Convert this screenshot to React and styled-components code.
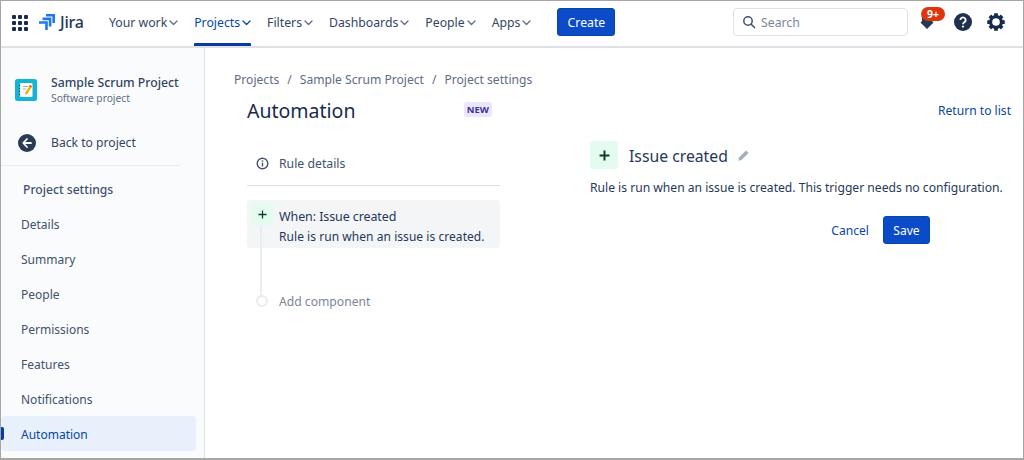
import React from "react";
import styled, { createGlobalStyle } from "styled-components";

const Global = createGlobalStyle`
  html, body { margin: 0; padding: 0; background: #fff; }
  body { font-family: "Noto Sans", "Open Sans", sans-serif; font-size: 12.25px; color: #172b4d; }
  * { box-sizing: border-box; }
`;

const Frame = styled.div`
  width: 1024px; height: 460px; border: 1px solid #a6a6a6; border-bottom-width: 2px;
  display: flex; flex-direction: column; overflow: hidden; background: #fff;
`;
const TopBar = styled.header`
  height: 47px; flex: none; display: flex; align-items: stretch; padding-left: 11px;
  border-bottom: 2px solid #dfe1e6;
`;
const GridBtn = styled.div`
  width: 16px; margin-right: 11px; padding-bottom: 2px; display: flex; align-items: center;
`;
const Logo = styled.div`
  display: flex; align-items: center; gap: 5px; width: 61px; margin-right: 9px; padding-bottom: 3px;
  font-size: 16px; font-weight: 500; color: #253858; letter-spacing: -0.2px;
`;
const NavItem = styled.div`
  position: relative; display: flex; align-items: center; gap: 2px; margin-right: 16px; height: 45px; padding-bottom: 2px;
  font-size: 12.25px; color: ${p => (p.$active ? "#0747a6" : "#344563")};
  &::after {
    content: ""; display: ${p => (p.$active ? "block" : "none")}; position: absolute;
    left: 0; right: 0; bottom: 0; height: 3px; background: #0a3aa5; border-radius: 1px 1px 0 0;
  }
`;
const CreateBtn = styled.button`
  width: 58px; height: 28px; margin: 7px 0 0 10px; border: 1px solid #0747a6; border-radius: 3px;
  background: #0b4bc8; color: #fff; font: 12.25px "Noto Sans", sans-serif; padding: 0;
`;
const Spacer = styled.div`flex: 1;`;
const Search = styled.div`
  width: 175px; height: 28px; margin: 7px 7px 0 0; border: 1px solid #dfe1e6; border-radius: 4px;
  display: flex; align-items: center; gap: 5px; padding-left: 8px; color: #7a869a; font-size: 12.25px;
`;
const IconSlot = styled.div`
  position: relative; width: 24px; height: 24px; margin-top: 9px;
  margin-right: ${p => p.$mr || 0}px; display: flex; align-items: center; justify-content: center;
`;
const Badge = styled.span`
  position: absolute; top: -3px; left: 6px; height: 14px; width: 24px; border-radius: 8px;
  background: #de350b; color: #fff; font-size: 10.5px; font-weight: 700; line-height: 14px; text-align: center;
`;
const Body = styled.div`flex: 1; display: flex; min-height: 0;`;
const Sidebar = styled.aside`
  width: 204px; flex: none; background: #fafbfc; border-right: 1px solid #dfe1e6; padding-top: 25px;
  display: flex; flex-direction: column;
`;
const ProjectHead = styled.div`
  display: flex; align-items: center; gap: 14px; padding-left: 14px; height: 34px;
`;
const ProjectName = styled.div`font-size: 12.25px; font-weight: 500; color: #344563; line-height: 16px; white-space: nowrap;`;
const ProjectType = styled.div`font-size: 10.25px; color: #5e6c84; line-height: 14px;`;
const BackRow = styled.div`
  display: flex; align-items: center; gap: 15px; padding-left: 17px; height: 33px; margin-top: 19px;
  font-size: 12.15px; color: #344563;
`;
const SideRule = styled.div`height: 1px; background: #ebecf0; width: 179px; margin-top: 6px;`;
const SideTitle = styled.div`
  font-size: 12.15px; font-weight: 500; color: #42526e; padding-left: 22px; height: 24px; line-height: 24px; margin-top: 12px; margin-bottom: 4px;
`;
const SideItem = styled.div`
  position: relative; height: 35px; line-height: 37px; padding-left: 20px; width: 195px; font-size: 12px; border-radius: 4px;
  color: ${p => (p.$active ? "#0747a6" : "#42526e")};
  background: ${p => (p.$active ? "#e8f0fb" : "transparent")};
  &::before {
    content: ""; display: ${p => (p.$active ? "block" : "none")}; position: absolute;
    left: 0; top: 11px; width: 3px; height: 13px; background: #0a3aa5; border-radius: 0 2px 2px 0;
  }
`;
const Main = styled.main`flex: 1; padding: 23px 12px 0 29px; min-width: 0;`;
const Crumbs = styled.div`
  display: flex; gap: 8px; font-size: 12.1px; color: #5e6c84; line-height: 18px; height: 18px;
`;
const Columns = styled.div`display: flex; padding-left: 13px;`;
const LeftCol = styled.section`width: 253px; flex: none; margin-right: 90px;`;
const TitleRow = styled.div`display: flex; align-items: center; justify-content: space-between; height: 30px; margin-top: 8px;`;
const H1 = styled.h1`margin: 0 0 2px; font-size: 19.5px; font-weight: 400; color: #172b4d; line-height: 28px;`;
const Lozenge = styled.span`
  background: #eae6ff; color: #403294; font-size: 9.5px; font-weight: 700; padding: 0 3px; margin: 0 8px 5px 0; border-radius: 3px; line-height: 15px;
`;
const DetailsRow = styled.div`
  display: flex; align-items: center; gap: 10px; padding: 2px 0 0 9px; height: 46px; margin-top: 13px;
  font-size: 12.25px; color: #42526e; border-bottom: 1px solid #dfe1e6; margin-bottom: 14px;
`;
const Flow = styled.div`position: relative; height: 120px;`;
const TriggerCard = styled.div`
  display: flex; height: 48px; width: 253px; background: #f4f5f7; border-radius: 4px;
`;
const TriggerIcon = styled.div`
  width: 22px; height: 23px; margin: 3px 6px 0 4px; background: #e3fcef; border-radius: 3px; display: flex; align-items: center; justify-content: center;
`;
const TriggerText = styled.div`padding-top: 7px;`;
const TriggerTitle = styled.div`font-size: 12.5px; color: #253858; line-height: 20px; letter-spacing: -0.1px;`;
const TriggerDesc = styled.div`font-size: 12px; color: #253858; line-height: 20px; white-space: nowrap; letter-spacing: 0.05px;`;
const Connector = styled.div`position: absolute; left: 13px; top: 26px; width: 2px; height: 69px; background: #ebecf0;`;
const AddRow = styled.div`
  display: flex; align-items: center; gap: 11px; padding-left: 9px; height: 20px; margin-top: 43px; color: #7a869a; font-size: 12.15px;
`;
const Dot = styled.span`width: 12px; height: 12px; flex: none; border-radius: 50%; border: 2px solid #ebecf0; background: #fff; position: relative; z-index: 1;`;
const RightCol = styled.section`flex: 1; min-width: 0; display: flex; flex-direction: column;`;
const ReturnLink = styled.div`
  align-self: flex-end; font-size: 12.1px; color: #0747a6; line-height: 18px; margin-top: 13px; white-space: nowrap;
`;
const PanelHead = styled.div`display: flex; align-items: center; margin-top: 21px; height: 28px;`;
const PanelIcon = styled.div`
  width: 28px; height: 28px; background: #e3fcef; border-radius: 3px; display: flex; align-items: center; justify-content: center; margin-right: 11px;
`;
const H2 = styled.h2`margin: 2px 9px 0 0; font-size: 15.75px; font-weight: 400; color: #253858;`;
const PanelDesc = styled.p`margin: 9px 0 0; font-size: 12.12px; line-height: 20px; color: #253858; white-space: nowrap;`;
const Actions = styled.div`display: flex; justify-content: flex-end; align-items: center; gap: 14px; margin: 18px 6px 0 0; width: 340px;`;
const Cancel = styled.span`color: #0747a6; font-size: 12.1px;`;
const SaveBtn = styled.button`
  width: 47px; height: 28px; border: 1px solid #0747a6; border-radius: 3px; background: #0b4bc8; color: #fff; font: 12.1px "Noto Sans", sans-serif; padding: 0;
`;

const Chevron = ({ color = "#5e6c84" }) => (
  <svg width="9" height="9" viewBox="0 0 9 9"><path d="M1 3 4.500 6.500 8 3" fill="none" stroke={color} strokeWidth="1.3" strokeLinecap="round" strokeLinejoin="round" /></svg>
);
const Plus = ({ s = 10, w = 1.6 }) => (
  <svg width={s} height={s} viewBox="0 0 10 10"><path d="M5 .5v9M.5 5h9" stroke="#0b3d2a" strokeWidth={w} fill="none" /></svg>
);
const Dots = () => (
  <svg width="16" height="16" viewBox="0 0 16 16" fill="#172b4d">
    {[0, 6, 12].flatMap(y => [0, 6, 12].map(x => <rect key={`${x}-${y}`} x={x} y={y} width="4" height="4" rx="1" />))}
  </svg>
);
const JiraMark = () => (
  <svg width="16" height="16" viewBox="0 0 16 16" fill="#1f78f0">
    <path d="M7 0h9v9h-2.600V2.600H7z" />
    <path d="M3.600 3.600h8.800v8.800H9.800V6.200H3.600z" />
    <path d="M0 7.200h8.800V16H6.200V9.800H0z" />
  </svg>
);
const ProjectLogo = () => (
  <svg width="22" height="22" viewBox="0 0 22 22" style={{ marginTop: -1 }}>
    <rect width="22" height="22" rx="2.500" fill="#13b5d6" />
    <rect x="5" y="4" width="12.500" height="14" rx="1" fill="#fff" />
    <path d="M5 6.500h-1M5 9.500h-1M5 12.500h-1M5 15.500h-1" stroke="#253858" strokeWidth="1" />
    <path d="M8 7.500h5M8 10h3" stroke="#a5adba" strokeWidth="1" />
    <path d="M15 6l2 1.300-4.500 7.500-2.300 1.200.2-2.500z" fill="#ffab00" />
    <path d="M15 6l2 1.300-.8 1.300-2-1.300z" fill="#e5493a" />
  </svg>
);
const BackIcon = () => (
  <svg width="18" height="18" viewBox="0 0 18 18">
    <circle cx="9" cy="9" r="9" fill="#2b3a55" />
    <path d="M9 5 5.200 9 9 13M5.500 9h7.500" fill="none" stroke="#fff" strokeWidth="1.800" strokeLinecap="round" strokeLinejoin="round" />
  </svg>
);
const InfoIcon = () => (
  <svg width="13" height="13" viewBox="0 0 13 13">
    <circle cx="6.500" cy="6.500" r="5.300" fill="none" stroke="#42526e" strokeWidth="1.400" />
    <rect x="5.800" y="5.700" width="1.400" height="3.800" fill="#42526e" />
    <rect x="5.800" y="3.400" width="1.400" height="1.400" fill="#42526e" />
  </svg>
);
const SearchIcon = () => (
  <svg width="14" height="14" viewBox="0 0 14 14"><circle cx="6" cy="6" r="4.200" fill="none" stroke="#42526e" strokeWidth="1.500" /><path d="m9.200 9.200 3.300 3.300" stroke="#42526e" strokeWidth="1.500" strokeLinecap="round" /></svg>
);
const Bell = () => (
  <svg width="18" height="18" viewBox="0 0 18 18" fill="#253858"><path d="M9 1a5 5 0 0 0-5 5v2L2.500 9.500 9 16l6.500-6.500L14 8V6a5 5 0 0 0-5-5z" /></svg>
);
const Help = () => (
  <svg width="18" height="18" viewBox="0 0 19 19">
    <circle cx="9.500" cy="9.500" r="9.500" fill="#1f2f4d" />
    <path d="M6.700 7.400a2.800 2.800 0 1 1 4.300 2.400c-1 .6-1.500 1-1.500 2" fill="none" stroke="#fff" strokeWidth="2" />
    <circle cx="9.500" cy="14.300" r="1.200" fill="#fff" />
  </svg>
);
const Gear = () => (
  <svg width="20" height="20" viewBox="0 0 24 24" fill="none"><path d="M12 1.500v5M12 17.500v5M1.500 12h5M17.500 12h5M4.600 4.600l3.500 3.500M15.900 15.900l3.500 3.500M19.400 4.600l-3.500 3.500M8.100 15.900l-3.500 3.500" stroke="#172b4d" strokeWidth="4.500" /><circle cx="12" cy="12" r="6.500" stroke="#172b4d" strokeWidth="3.800" fill="#fff" /></svg>
);
const Pencil = () => (
  <svg width="13" height="13" viewBox="0 0 13 13" fill="#a5adba"><path d="M9 1.500 11.500 4 4.500 11 1.500 11.700 2 8.500z" /></svg>
);

const nav = [["Your work"], ["Projects", true], ["Filters"], ["Dashboards"], ["People"], ["Apps"]];
const side = ["Details", "Summary", "People", "Permissions", "Features", "Notifications"];

export default function App() {
  return (
    <Frame>
      <Global />
      <TopBar>
        <GridBtn><Dots /></GridBtn>
        <Logo><JiraMark />Jira</Logo>
        {nav.map(([label, active]) => (
          <NavItem key={label} $active={active}>{label}<Chevron color={active ? "#0747a6" : "#5e6c84"} /></NavItem>
        ))}
        <CreateBtn>Create</CreateBtn>
        <Spacer />
        <Search><SearchIcon />Search</Search>
        <IconSlot $mr={12}><Bell /><Badge>9+</Badge></IconSlot>
        <IconSlot $mr={9}><Help /></IconSlot>
        <IconSlot $mr={15}><Gear /></IconSlot>
      </TopBar>
      <Body>
        <Sidebar>
          <ProjectHead>
            <ProjectLogo />
            <div>
              <ProjectName>Sample Scrum Project</ProjectName>
              <ProjectType>Software project</ProjectType>
            </div>
          </ProjectHead>
          <BackRow><BackIcon />Back to project</BackRow>
          <SideRule />
          <SideTitle>Project settings</SideTitle>
          {side.map(s => <SideItem key={s}>{s}</SideItem>)}
          <SideItem $active>Automation</SideItem>
        </Sidebar>
        <Main>
          <Crumbs>
            <span>Projects</span><span>/</span><span>Sample Scrum Project</span><span>/</span><span>Project settings</span>
          </Crumbs>
          <Columns>
            <LeftCol>
              <TitleRow><H1>Automation</H1><Lozenge>NEW</Lozenge></TitleRow>
              <DetailsRow><InfoIcon />Rule details</DetailsRow>
              <Flow>
                <TriggerCard>
                  <TriggerIcon><Plus s={9} w={1.4} /></TriggerIcon>
                  <TriggerText>
                    <TriggerTitle>When: Issue created</TriggerTitle>
                    <TriggerDesc>Rule is run when an issue is created.</TriggerDesc>
                  </TriggerText>
                </TriggerCard>
                <Connector />
                <AddRow><Dot />Add component</AddRow>
              </Flow>
            </LeftCol>
            <RightCol>
              <ReturnLink>Return to list</ReturnLink>
              <PanelHead>
                <PanelIcon><Plus s={11} w={1.8} /></PanelIcon>
                <H2>Issue created</H2>
                <Pencil />
              </PanelHead>
              <PanelDesc>Rule is run when an issue is created. This trigger needs no configuration.</PanelDesc>
              <Actions><Cancel>Cancel</Cancel><SaveBtn>Save</SaveBtn></Actions>
            </RightCol>
          </Columns>
        </Main>
      </Body>
    </Frame>
  );
}
